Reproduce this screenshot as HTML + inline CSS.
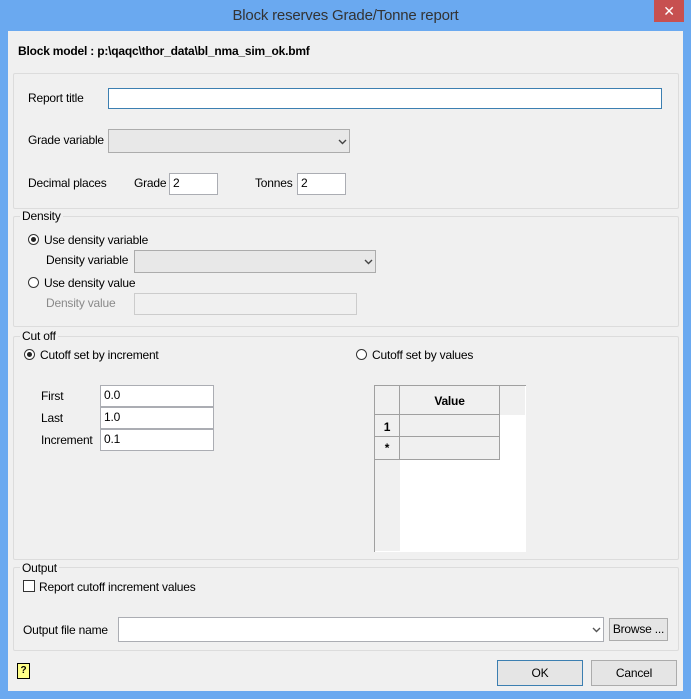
<!DOCTYPE html><html><head><style>
body{margin:0;width:691px;height:699px;background:#6aa9f0;font-family:"Liberation Sans",sans-serif;font-size:12px;letter-spacing:-0.2px;color:#000;position:relative;overflow:hidden}
.a{position:absolute}
.c{position:absolute;left:8px;top:31px;width:675px;height:660px;background:#f0f0f0}
.g{position:absolute;border:1px solid #dcdcdc;border-radius:2px}
.in{position:absolute;background:#fff;border:1px solid #abadb3;box-sizing:border-box;padding:2px 3px;font-size:12px}
.cb{position:absolute;background:#e8e8e8;border:1px solid #acacac;box-sizing:border-box}
.chev{position:absolute;width:9px;height:6px}
.rad{position:absolute;width:11px;height:11px;border:1px solid #333;border-radius:50%;background:#fff;box-sizing:border-box}
.btn{position:absolute;background:#e5e5e5;border:1px solid #acacac;box-sizing:border-box;text-align:center}
.lbl{position:absolute;background:#f0f0f0;padding:0 2px}
</style></head><body>
<div class="a" style="left:0;top:7px;width:691px;text-align:center;font-size:15px;color:#333">Block reserves Grade/Tonne report</div>
<div class="a" style="left:654px;top:0;width:30px;height:22px;background:#c75050;color:#fff;text-align:center;font-size:14px;line-height:22px">✕</div>
<div class="c"></div>
<div class="a" style="left:18px;top:44px;font-weight:bold">Block model : p:\qaqc\thor_data\bl_nma_sim_ok.bmf</div>
<div class="g" style="left:13px;top:73px;width:664px;height:134px"></div>
<div class="a" style="left:28px;top:91px">Report title</div>
<div class="in" style="left:108px;top:88px;width:554px;height:21px;border-color:#3c7fb1"></div>
<div class="a" style="left:28px;top:133px">Grade variable</div>
<div class="cb" style="left:108px;top:129px;width:242px;height:24px"><svg class="chev" style="left:229px;top:9px" viewBox="0 0 9 6"><path d="M1 1l3.5 3.5L8 1" fill="none" stroke="#444" stroke-width="1.4"/></svg></div>
<div class="a" style="left:28px;top:176px">Decimal places</div>
<div class="a" style="left:134px;top:176px">Grade</div>
<div class="in" style="left:169px;top:173px;width:49px;height:22px">2</div>
<div class="a" style="left:255px;top:176px">Tonnes</div>
<div class="in" style="left:297px;top:173px;width:49px;height:22px">2</div>
<div class="g" style="left:13px;top:216px;width:664px;height:109px"></div>
<div class="lbl" style="left:20px;top:209px">Density</div>
<div class="rad" style="left:28px;top:234px"><div class="a" style="left:2px;top:2px;width:5px;height:5px;border-radius:50%;background:#222"></div></div>
<div class="a" style="left:44px;top:233px">Use density variable</div>
<div class="a" style="left:46px;top:253px">Density variable</div>
<div class="cb" style="left:134px;top:250px;width:242px;height:23px"><svg class="chev" style="left:229px;top:8px" viewBox="0 0 9 6"><path d="M1 1l3.5 3.5L8 1" fill="none" stroke="#444" stroke-width="1.4"/></svg></div>
<div class="rad" style="left:28px;top:277px"></div>
<div class="a" style="left:44px;top:276px">Use density value</div>
<div class="a" style="left:46px;top:296px;color:#8a8a8a">Density value</div>
<div class="in" style="left:134px;top:293px;width:223px;height:22px;background:#f0f0f0;border-color:#ccc"></div>
<div class="g" style="left:13px;top:336px;width:664px;height:222px"></div>
<div class="lbl" style="left:20px;top:329px">Cut off</div>
<div class="rad" style="left:24px;top:349px"><div class="a" style="left:2px;top:2px;width:5px;height:5px;border-radius:50%;background:#222"></div></div>
<div class="a" style="left:40px;top:348px">Cutoff set by increment</div>
<div class="rad" style="left:356px;top:349px"></div>
<div class="a" style="left:372px;top:348px">Cutoff set by values</div>
<div class="a" style="left:41px;top:389px">First</div>
<div class="in" style="left:100px;top:385px;width:114px;height:22px">0.0</div>
<div class="a" style="left:41px;top:411px">Last</div>
<div class="in" style="left:100px;top:407px;width:114px;height:22px">1.0</div>
<div class="a" style="left:41px;top:433px">Increment</div>
<div class="in" style="left:100px;top:429px;width:114px;height:22px">0.1</div>
<div class="a" style="left:374px;top:385px;width:151px;height:166px;background:#fff;border-left:1px solid #a0a0a0;border-top:1px solid #a0a0a0"></div>
<div class="a" style="left:375px;top:386px;width:25px;height:165px;background:#f0f0f0"></div>
<div class="a" style="left:375px;top:386px;width:150px;height:29px;background:#f0f0f0"></div>
<div class="a" style="left:375px;top:386px;width:124px;height:73px;background:#f0f0f0;border-right:1px solid #a0a0a0;border-bottom:1px solid #a0a0a0"></div>
<div class="a" style="left:399px;top:386px;width:1px;height:73px;background:#a0a0a0"></div>
<div class="a" style="left:375px;top:414px;width:124px;height:1px;background:#a0a0a0"></div>
<div class="a" style="left:375px;top:436px;width:124px;height:1px;background:#a0a0a0"></div>
<div class="a" style="left:400px;top:394px;width:99px;text-align:center;font-weight:bold">Value</div>
<div class="a" style="left:375px;top:420px;width:24px;text-align:center;font-weight:bold">1</div>
<div class="a" style="left:375px;top:441px;width:24px;text-align:center;font-weight:bold">*</div>
<div class="g" style="left:13px;top:567px;width:664px;height:82px"></div>
<div class="lbl" style="left:20px;top:561px">Output</div>
<div class="a" style="left:23px;top:580px;width:12px;height:12px;border:1px solid #333;background:#fff;box-sizing:border-box"></div>
<div class="a" style="left:39px;top:580px">Report cutoff increment values</div>
<div class="a" style="left:23px;top:623px">Output file name</div>
<div class="in" style="left:118px;top:617px;width:486px;height:25px"></div>
<svg class="chev" style="left:592px;top:627px" viewBox="0 0 9 6"><path d="M1 1l3.5 3.5L8 1" fill="none" stroke="#555" stroke-width="1.4"/></svg>
<div class="btn" style="left:609px;top:618px;width:59px;height:23px;line-height:21px">Browse ...</div>
<div class="a" style="left:17px;top:663px;width:11px;height:14px;border:1px solid #000;background:#ff8;font-size:10px;font-weight:bold;text-align:center;line-height:14px">?</div>
<div class="btn" style="left:497px;top:660px;width:86px;height:26px;line-height:24px;border-color:#3c7fb1">OK</div>
<div class="btn" style="left:591px;top:660px;width:86px;height:26px;line-height:24px">Cancel</div>
</body></html>
